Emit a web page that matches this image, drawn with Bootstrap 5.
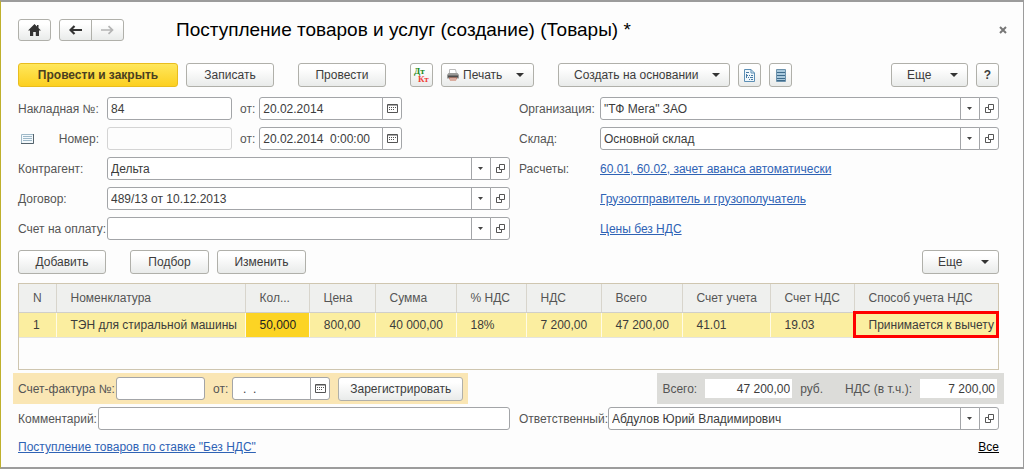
<!DOCTYPE html>
<html lang="ru">
<head>
<meta charset="utf-8">
<meta name="viewport" content="width=device-width, initial-scale=1">
<title>Поступление товаров и услуг (создание) (Товары) *</title>
<link href="https://cdn.jsdelivr.net/npm/bootstrap@5.3.0/dist/css/bootstrap.min.css" rel="stylesheet">
<style>
  :root { --line: #a3a5a8; --ink: #3c3c3c; --label: #555; }
  body {
    font: 12px/16px "Liberation Sans", Arial, sans-serif;
    color: var(--ink); background: #fdfdfd;
  }
  .doc-window {
    min-height: 100vh; padding: 16px 24px 12px 17px;
    border: solid #9c9c9c; border-width: 2px 1px 2px 1px; border-left-color: #bfb02c;
  }
  .doc-title { font-size: 19px; line-height: 24px; color: #000; margin-left: 52px; }
  .btn-doc {
    --bs-btn-font-size: 12px; --bs-btn-line-height: 16px;
    --bs-btn-padding-x: 0; --bs-btn-padding-y: 0;
    --bs-btn-color: var(--ink); --bs-btn-border-color: #b0b0aa; --bs-btn-border-radius: 3px;
    --bs-btn-hover-color: #000; --bs-btn-hover-border-color: #888;
    height: 24px; background: linear-gradient(#fff 20%, #e9ebea);
    display: inline-flex; align-items: center; justify-content: center; white-space: nowrap;
  }
  .btn-doc.btn-main {
    --bs-btn-color: #4a4020; --bs-btn-border-color: #e9bd1e;
    background: linear-gradient(#ffe75c, #fcd021); font-weight: bold;
  }
  .btn-nav { height: 22px; width: 33px; }
  .btn-sq { width: 23px; }
  .w-more { width: 77px; } .w-add { width: 88px; } .w-edit { width: 89px; } .w-pick { width: 79px; }
  .w-print { width: 93px; } .w-base { width: 172px; } .w-main { width: 160px; } .w-reg { width: 125px; }
  .btn-menu { justify-content: space-between; padding: 0 9px 0 15px; }
  .btn-menu.w-print { padding-left: 5px; }
  .caret { border: solid transparent; border-width: 4px 4px 0; border-top-color: #333; }
  .close-x { width: 10px; height: 10px; margin-right: -9px; color: #777; }
  .toolbar { margin-top: 21px; }

  .form-cols { display: grid; grid-template-columns: 492fr 480fr; gap: 7px 9px; margin-top: 10px; }
  .field-line { display: flex; align-items: center; height: 23px; }
  .field-line > label, .field-line > .cap { color: var(--label); white-space: nowrap; }
  .cap-a { width: 89px; flex: none; } .cap-b { width: 81px; flex: none; }
  .cap-note { width: 80px; flex: none; } .cap-inv { width: 98px; flex: none; }
  .w-num { width: 125px; } .w-date { width: 143px; } .w-inv { width: 89px; } .w-invdate { width: 98px; }

  .form-control, .form-select {
    font-size: 12px; line-height: 16px; height: 23px; min-height: 0; padding: 0 3px;
    color: var(--ink); border-color: var(--line); border-radius: 3px; background-color: #fff;
  }
  .form-control:disabled { background: #fdfdfd; border-color: #d4d4d4; }
  .form-select {
    background-image:
      linear-gradient(var(--line), var(--line)),
      url("data:image/svg+xml,%3Csvg xmlns='http://www.w3.org/2000/svg' viewBox='0 0 5 3'%3E%3Cpath d='M0 0h5L2.5 3z' fill='%23444'/%3E%3C/svg%3E");
    background-size: 1px 100%, 5px 3px;
    background-position: right 18px top, right 7px center;
    padding-right: 22px;
  }
  .input-group { flex-wrap: nowrap; }
  .btn-side {
    width: 20px; height: 23px; padding: 0; border: 1px solid var(--line); border-radius: 3px;
    background: #fff; display: flex; align-items: center; justify-content: center; flex: none;
  }
  .btn-side svg, .btn-doc svg { display: block; flex: none; }
  a { color: #2f63b5; }

  .table-tools { margin-top: 10px; }
  .goods { border: 1px solid #cfc6b0; height: 87px; background: #fdfdfd; margin-top: 9px; }
  .goods .table { --bs-table-bg: transparent; table-layout: fixed; margin: 0; color: var(--ink); }
  .goods th, .goods td { padding: 0 14px; white-space: nowrap; border: 0; border-right: 1px solid #d8d5cc; vertical-align: middle; }
  .goods th { font-weight: normal; color: var(--label); height: 28px; background: #eff0ee; border-bottom: 1px solid #d0cfca; }
  .goods td { height: 25px; background: #fbeea0; border-right-color: #fffbe6; color: var(--ink); border-bottom: 1px solid #e4e4e0; }
  .goods tr > :last-child { border-right: 0; padding-right: 0; }
  .goods td.cell-active { background: #fcd424; color: #222; }
  .goods td.cell-marked { outline: 3px solid #f00; outline-offset: -2px; }

  .totals { margin-top: 3px; }
  .band { display: flex; align-items: center; height: 31px; padding: 0 5px; }
  .band-invoice { background: #fae6b4; margin-left: -5px; }
  .band-total { background: #dcdcd9; margin-right: -5px; padding-right: 7px; }
  .band label, .band span { color: var(--label); white-space: nowrap; }
  .band-total .form-control { height: 19px; border: 0; border-radius: 0; text-align: right; padding: 0 2px; }
  .w-sum { width: 87px; } .w-vat { width: 77px; }
  .gap-wide { margin-left: 22px; }
  .form-cols.foot { margin-top: 3px; }
  footer { margin-top: 9px; }
</style>
</head>
<body>
<svg class="d-none" xmlns="http://www.w3.org/2000/svg">
  <symbol id="i-open" viewBox="0 0 9 9"><path d="M3.5.5h5v5h-5zM3 3.5H.5v5h5V6" fill="none" stroke="#555"/></symbol>
  <symbol id="i-cal" viewBox="0 0 11 9"><path d="M.5.5h10v8H.5z" fill="#fff" stroke="#555"/><path d="M1 1.500h9" stroke="#aaa"/><path d="M2 3.500h7M2 5.500h5" stroke="#555" stroke-dasharray="1 1"/></symbol>
</svg>
<main class="doc-window d-flex flex-column">

  <header class="d-flex align-items-center">
    <button class="btn btn-doc btn-nav" type="button" aria-label="Начальная страница">
      <svg width="13" height="12" viewBox="0 0 13 12"><path d="M6.500 0 0 6.500h2V12h3.200V8h2.600v4H11V6.500h2L10.500 4V1H9v1.500z" fill="#333"/></svg>
    </button>
    <div class="btn-group ms-2" role="group" aria-label="Навигация">
      <button class="btn btn-doc btn-nav" type="button" aria-label="Назад">
        <svg width="13" height="10" viewBox="0 0 13 10"><path d="M5.500 1 1.500 5l4 4M2 5h11" fill="none" stroke="#333" stroke-width="2.200"/></svg>
      </button>
      <button class="btn btn-doc btn-nav" type="button" aria-label="Вперёд">
        <svg width="13" height="10" viewBox="0 0 13 10"><path d="M7.500 1.200 11.500 5l-4 3.800M11.500 5H0" fill="none" stroke="#b4b4b4" stroke-width="1.700"/></svg>
      </button>
    </div>
    <h1 class="doc-title mb-0 fw-normal">Поступление товаров и услуг (создание) (Товары) *</h1>
    <button class="btn p-0 border-0 ms-auto close-x d-flex" type="button" aria-label="Закрыть">
      <svg width="10" height="10" viewBox="0 0 10 10"><path d="m2 2 6 6m0-6L2 8" stroke="currentColor" stroke-width="2"/></svg>
    </button>
  </header>

  <div class="toolbar d-flex gap-2">
    <button class="btn btn-doc btn-main w-main" type="button">Провести и закрыть</button>
    <button class="btn btn-doc w-add" type="button">Записать</button>
    <button class="btn btn-doc w-add ms-3" type="button">Провести</button>
    <button class="btn btn-doc btn-sq ms-3" type="button" aria-label="Проводки">
      <svg width="17" height="17" viewBox="0 0 17 17" font-family="Liberation Serif, serif" font-weight="bold" font-size="9"><text x="1" y="7" fill="#1c8a1c">Дт</text><text x="5" y="15" fill="#f0403a">Кт</text></svg>
    </button>
    <button class="btn btn-doc btn-menu w-print" type="button">
      <span class="d-flex align-items-center gap-1"><svg width="12" height="12" viewBox="0 0 12 12"><path d="M2.500.5h6l1 4.500h-7z" fill="#fff" stroke="#bbb"/><path d="M1.500 4h9L12 6v3.500H0V6z" fill="#9a9a98"/><path d="M1 6.500h10v2H1z" fill="#4c4c4c"/><path d="M2 8.500h8l-1 3H3z" fill="#c46a50"/><path d="M3 9.500h6v1H3z" fill="#eee"/></svg>Печать</span><span class="caret"></span>
    </button>
    <button class="btn btn-doc btn-menu w-base ms-3" type="button">Создать на основании<span class="caret"></span></button>
    <button class="btn btn-doc btn-sq" type="button" aria-label="Отчёт">
      <svg width="11" height="13" viewBox="0 0 11 13"><path d="M.5.5H7L10.500 4v8.500H.5z" fill="#eef6fb" stroke="#5c8fb5"/><path d="M7 .5V4h3.500" fill="none" stroke="#5c8fb5"/><path d="M2 3.500h3M2.500 5v4M2.500 6.500H4M5 6.500h1m1 0h2M4 8.500h1m1 0h3M5 10.500h1m1 0h2" fill="none" stroke="#4779a3"/></svg>
    </button>
    <button class="btn btn-doc btn-sq" type="button" aria-label="Список">
      <svg width="10" height="13" viewBox="0 0 10 13"><path d="M.5.5h9v12h-9z" fill="#a9c9dd" stroke="#6d93ad"/><path d="M1 3.500h8M1 6.500h8M1 9.500h8M1 11.500h8" stroke="#3e6b8c"/></svg>
    </button>
    <button class="btn btn-doc btn-menu w-more ms-auto" type="button">Еще<span class="caret"></span></button>
    <button class="btn btn-doc btn-sq fw-bold" type="button">?</button>
  </div>

  <div class="form-cols">
    <div class="field-line">
      <label class="cap-a" for="bill">Накладная №:</label>
      <input class="form-control w-num" id="bill" value="84">
      <label class="ms-2 me-1" for="billDate">от:</label>
      <div class="input-group w-date"><input class="form-control" id="billDate" value="20.02.2014"><button class="btn-side" type="button" aria-label="Календарь"><svg width="11" height="9"><use href="#i-cal"/></svg></button></div>
    </div>
    <div class="field-line">
      <label class="cap-b" for="org">Организация:</label>
      <div class="input-group"><select class="form-select" id="org"><option>"ТФ Мега" ЗАО</option></select><button class="btn-side" type="button" aria-label="Открыть"><svg width="9" height="9"><use href="#i-open"/></svg></button></div>
    </div>

    <div class="field-line">
      <div class="cap cap-a d-flex align-items-center">
        <svg width="17" height="10" viewBox="-3 0 17 10"><path d="M.5.5h12v9H.5z" fill="#f4f9fc" stroke="#9fb9c8"/><path d="M2 2.500h9M2 4.500h9M2 6.500h9" stroke="#9db8c8"/><path d="M12.500 0v9.500H0" fill="none" stroke="#55636c"/></svg>
        <label class="ms-auto me-2" for="num">Номер:</label>
      </div>
      <input class="form-control w-num" id="num" disabled>
      <label class="ms-2 me-1" for="numDate">от:</label>
      <div class="input-group w-date"><input class="form-control" id="numDate" value="20.02.2014&nbsp; 0:00:00"><button class="btn-side" type="button" aria-label="Календарь"><svg width="11" height="9"><use href="#i-cal"/></svg></button></div>
    </div>
    <div class="field-line">
      <label class="cap-b" for="store">Склад:</label>
      <div class="input-group"><select class="form-select" id="store"><option>Основной склад</option></select><button class="btn-side" type="button" aria-label="Открыть"><svg width="9" height="9"><use href="#i-open"/></svg></button></div>
    </div>

    <div class="field-line">
      <label class="cap-a" for="partner">Контрагент:</label>
      <div class="input-group"><select class="form-select" id="partner"><option>Дельта</option></select><button class="btn-side" type="button" aria-label="Открыть"><svg width="9" height="9"><use href="#i-open"/></svg></button></div>
    </div>
    <div class="field-line"><span class="cap cap-b">Расчеты:</span><a href="#">60.01, 60.02, зачет аванса автоматически</a></div>

    <div class="field-line">
      <label class="cap-a" for="contract">Договор:</label>
      <div class="input-group"><select class="form-select" id="contract"><option>489/13 от 10.12.2013</option></select><button class="btn-side" type="button" aria-label="Открыть"><svg width="9" height="9"><use href="#i-open"/></svg></button></div>
    </div>
    <div class="field-line"><span class="cap-b"></span><a href="#">Грузоотправитель и грузополучатель</a></div>

    <div class="field-line">
      <label class="cap-a" for="invoiceFor">Счет на оплату:</label>
      <div class="input-group"><select class="form-select" id="invoiceFor"><option></option></select><button class="btn-side" type="button" aria-label="Открыть"><svg width="9" height="9"><use href="#i-open"/></svg></button></div>
    </div>
    <div class="field-line"><span class="cap-b"></span><a href="#">Цены без НДС</a></div>
  </div>

  <div class="table-tools d-flex gap-2">
    <button class="btn btn-doc w-add" type="button">Добавить</button>
    <button class="btn btn-doc w-pick ms-3" type="button">Подбор</button>
    <button class="btn btn-doc w-edit" type="button">Изменить</button>
    <button class="btn btn-doc btn-menu w-more ms-auto" type="button">Еще<span class="caret"></span></button>
  </div>

  <div class="goods">
    <table class="table">
      <colgroup><col style="width:37px"><col><col style="width:64px"><col style="width:66px"><col style="width:81px"><col style="width:70px"><col style="width:75px"><col style="width:81px"><col style="width:88px"><col style="width:84px"><col style="width:144px"></colgroup>
      <thead><tr><th>N</th><th>Номенклатура</th><th>Кол...</th><th>Цена</th><th>Сумма</th><th>% НДС</th><th>НДС</th><th>Всего</th><th>Счет учета</th><th>Счет НДС</th><th>Способ учета НДС</th></tr></thead>
      <tbody><tr><td>1</td><td>ТЭН для стиральной машины</td><td class="cell-active">50,000</td><td class="text-end">800,00</td><td class="text-end">40 000,00</td><td>18%</td><td class="text-end">7 200,00</td><td class="text-end">47 200,00</td><td>41.01</td><td>19.03</td><td class="cell-marked">Принимается к вычету</td></tr></tbody>
    </table>
  </div>

  <div class="totals d-flex justify-content-between">
    <div class="band band-invoice">
      <label class="cap-inv" for="inv">Счет-фактура №:</label>
      <input class="form-control w-inv" id="inv">
      <label class="ms-2 me-1" for="invDate">от:</label>
      <div class="input-group w-invdate"><input class="form-control" id="invDate" value="&nbsp; .&nbsp; ."><button class="btn-side" type="button" aria-label="Календарь"><svg width="11" height="9"><use href="#i-cal"/></svg></button></div>
      <button class="btn btn-doc w-reg ms-2" type="button">Зарегистрировать</button>
    </div>
    <div class="band band-total">
      <label for="sum">Всего:</label>
      <input class="form-control w-sum ms-2" id="sum" value="47 200,00" readonly>
      <span class="ms-2">руб.</span>
      <label class="gap-wide" for="vat">НДС (в т.ч.):</label>
      <input class="form-control w-vat ms-2" id="vat" value="7 200,00" readonly>
    </div>
  </div>

  <div class="form-cols foot">
    <div class="field-line">
      <label class="cap-note" for="note">Комментарий:</label>
      <input class="form-control flex-fill" id="note">
    </div>
    <div class="field-line">
      <label class="cap-a" for="resp">Ответственный:</label>
      <div class="input-group"><select class="form-select" id="resp"><option>Абдулов Юрий Владимирович</option></select><button class="btn-side" type="button" aria-label="Открыть"><svg width="9" height="9"><use href="#i-open"/></svg></button></div>
    </div>
  </div>

  <footer class="d-flex justify-content-between">
    <a href="#">Поступление товаров по ставке "Без НДС"</a>
    <a class="text-black" href="#">Все</a>
  </footer>
</main>
<script src="https://cdn.jsdelivr.net/npm/bootstrap@5.3.0/dist/js/bootstrap.bundle.min.js"></script>
</body>
</html>
